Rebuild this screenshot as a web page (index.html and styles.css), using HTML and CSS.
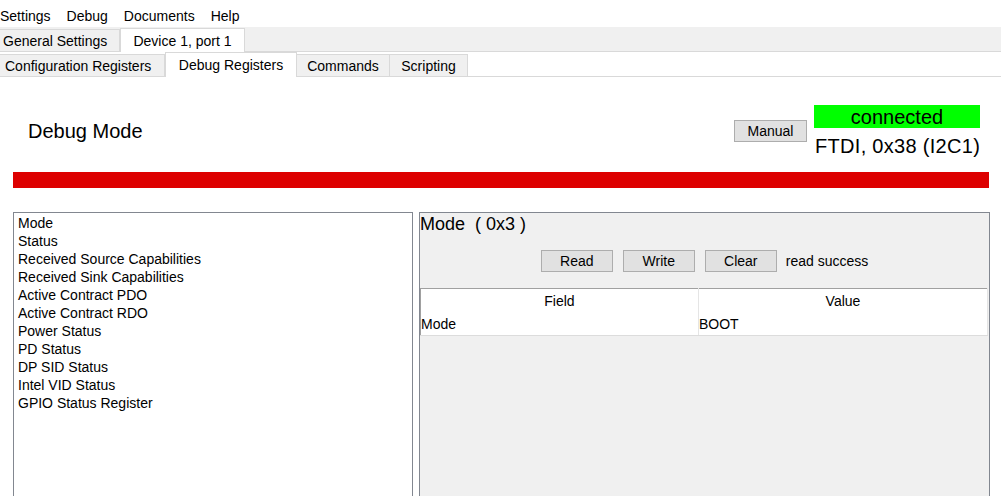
FILE: index.html
```html
<!DOCTYPE html>
<html>
<head>
<meta charset="utf-8">
<title>Debug Registers</title>
<link rel="stylesheet" href="styles.css">
</head>
<body>
<div class="menubar">
  <span class="menu-item">Settings</span>
  <span class="menu-item">Debug</span>
  <span class="menu-item">Documents</span>
  <span class="menu-item">Help</span>
</div>
<div class="tabbar tabbar-top">
  <div class="tab tab-left t-general">General Settings</div>
  <div class="tab tab-active t-device">Device 1, port 1</div>
</div>
<div class="tabbar tabbar-sub">
  <div class="tab tab-left t-config">Configuration Registers</div>
  <div class="tab tab-active t-debug">Debug Registers</div>
  <div class="tab t-commands">Commands</div>
  <div class="tab t-scripting">Scripting</div>
</div>
<div class="header">
  <div class="title">Debug Mode</div>
  <button class="btn btn-manual">Manual</button>
  <div class="status">
    <div class="connected">connected</div>
    <div class="device">FTDI, 0x38 (I2C1)</div>
  </div>
</div>
<div class="redbar"></div>
<div class="main">
  <ul class="reglist">
    <li>Mode</li>
    <li>Status</li>
    <li>Received Source Capabilities</li>
    <li>Received Sink Capabilities</li>
    <li>Active Contract PDO</li>
    <li>Active Contract RDO</li>
    <li>Power Status</li>
    <li>PD Status</li>
    <li>DP SID Status</li>
    <li>Intel VID Status</li>
    <li>GPIO Status Register</li>
  </ul>
  <div class="panel">
    <div class="panel-title">Mode&nbsp; ( 0x3 )</div>
    <div class="actions">
      <button class="btn btn-action">Read</button>
      <button class="btn btn-action">Write</button>
      <button class="btn btn-action">Clear</button>
      <span class="result">read success</span>
    </div>
    <table class="fields">
      <thead>
        <tr><th class="col-field">Field</th><th>Value</th></tr>
      </thead>
      <tbody>
        <tr><td>Mode</td><td>BOOT</td></tr>
      </tbody>
    </table>
  </div>
</div>
</body>
</html>
```
FILE: styles.css
```css
html, body {
  margin: 0;
  height: 100%;
  overflow: hidden;
  background: #ffffff;
  color: #000000;
  font-family: "Liberation Sans", Arial, sans-serif;
  font-size: 14px;
}

.menubar {
  display: flex;
  gap: 16px;
  height: 27px;
  box-sizing: border-box;
  padding-top: 8px;
  line-height: 16px;
}

.tabbar {
  display: flex;
  align-items: flex-end;
  height: 25px;
  box-sizing: border-box;
  border-bottom: 1px solid #d9d9d9;
}

.tabbar-top {
  background: #f0f0f0;
}

.tabbar-sub {
  background: #ffffff;
}

.tab {
  box-sizing: border-box;
  height: 22px;
  display: flex;
  align-items: center;
  justify-content: center;
  background: #f0f0f0;
  border: 1px solid #d9d9d9;
  border-bottom: none;
  line-height: 16px;
  white-space: nowrap;
}

.tab-left {
  justify-content: flex-start;
}

.tab-active {
  background: #ffffff;
  height: 25px;
  margin-bottom: -1px;
  position: relative;
}

.tabbar-top .tab-active {
  height: 24px;
}

.t-general { width: 120px; padding-left: 3px; border-left: none; }
.t-device { width: 125px; }
.t-config { width: 165px; padding-left: 5px; border-left: none; }
.t-debug { width: 132px; }
.t-commands { width: 93px; border-left: none; }
.t-scripting { width: 78px; border-left: none; }

.header {
  display: flex;
  align-items: center;
  padding: 28px 21px 0 28px;
}

.title {
  flex: 1;
  font-size: 20px;
  line-height: 24px;
  margin-top: -1px;
}

.btn {
  box-sizing: border-box;
  height: 22px;
  padding: 0;
  background: #e1e1e1;
  border: 1px solid #adadad;
  border-radius: 0;
  font-family: "Liberation Sans", Arial, sans-serif;
  font-size: 14px;
  line-height: 20px;
  color: #000000;
}

.btn-manual {
  width: 73px;
  margin-right: 7px;
  margin-top: -1px;
}

.status {
  width: 166px;
}

.connected {
  height: 23px;
  background: #00ff00;
  text-align: center;
  font-size: 20px;
  line-height: 24px;
}

.device {
  margin-top: 6px;
  padding-left: 1px;
  font-size: 20px;
  line-height: 24px;
  letter-spacing: 0.3px;
  white-space: nowrap;
}

.redbar {
  margin: 14px 12px 0 13px;
  height: 16px;
  background: #dd0000;
}

.main {
  display: flex;
  gap: 6px;
  padding: 0 11px 0 13px;
  margin-top: 24px;
}

.reglist {
  box-sizing: border-box;
  width: 400px;
  height: 320px;
  margin: 0;
  padding: 1px 0 0 4px;
  list-style: none;
  border: 1px solid #828790;
  background: #ffffff;
}

.reglist li {
  line-height: 18px;
}

.panel {
  flex: 1;
  box-sizing: border-box;
  height: 320px;
  background: #f0f0f0;
  border: 1px solid #828790;
}

.panel-title {
  font-size: 18px;
  line-height: 22px;
}

.actions {
  display: flex;
  justify-content: center;
  align-items: center;
  gap: 10px;
  margin-top: 15px;
}

.btn-action {
  width: 72px;
}

.result {
  margin-left: -1px;
  line-height: 22px;
}

.fields {
  width: calc(100% - 1px);
  margin-top: 16px;
  border-collapse: collapse;
  background: #ffffff;
  border: 1px solid #a0a0a0;
}

.fields th {
  height: 24px;
  padding: 0;
  font-weight: normal;
  text-align: center;
  border-right: 1px solid #e5e5e5;
}

.fields .col-field {
  width: 277px;
}

.fields td {
  height: 22px;
  padding: 0;
  text-align: left;
  border-right: 1px solid #e5e5e5;
  border-bottom: 1px solid #dcdcdc;
}
```
